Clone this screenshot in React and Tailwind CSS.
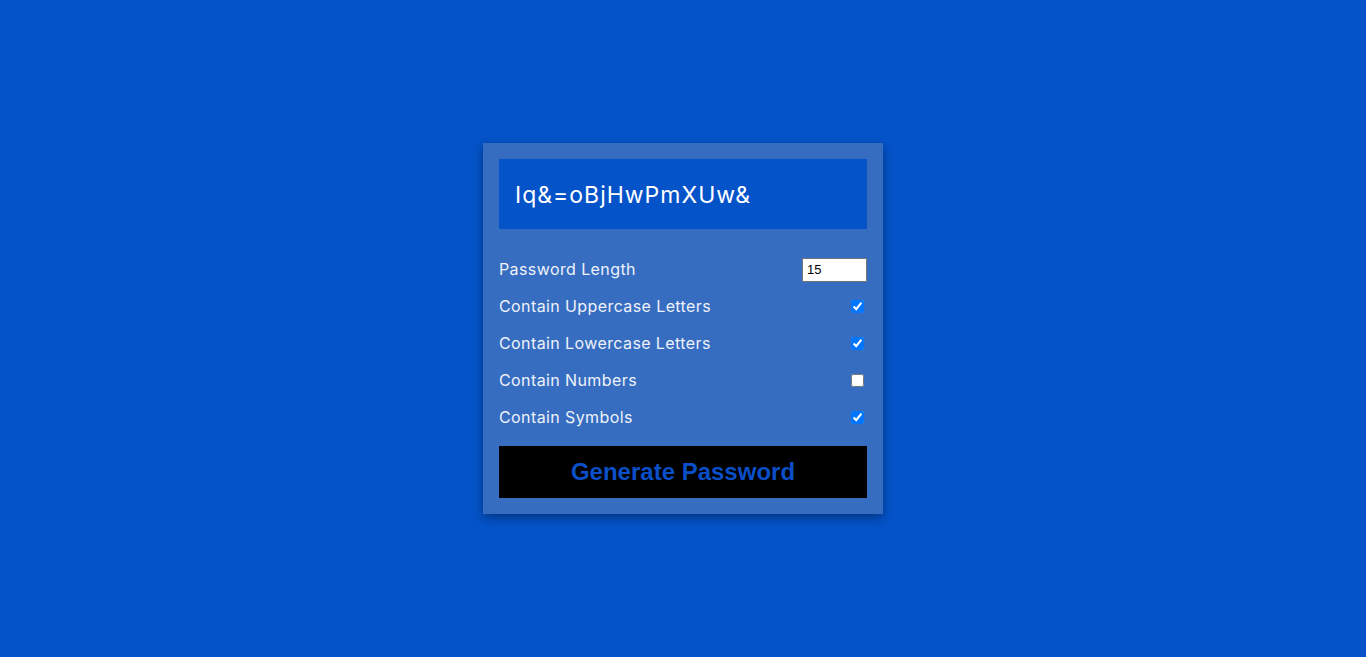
import React, { useState } from 'react';

const options = [
  { id: 'upper', label: 'Contain Uppercase Letters', on: true },
  { id: 'lower', label: 'Contain Lowercase Letters', on: true },
  { id: 'numbers', label: 'Contain Numbers', on: false },
  { id: 'symbols', label: 'Contain Symbols', on: true },
];

function App() {
  const [length, setLength] = useState(15);
  const [checks, setChecks] = useState(
    Object.fromEntries(options.map((o) => [o.id, o.on]))
  );

  return (
    <div
      className="min-h-screen w-full bg-[#0453c9] flex justify-center pt-[143px]"
      style={{ fontFamily: 'Inter, "Open Sans", sans-serif' }}
    >
      <div className="w-[400px] h-[371px] bg-[#366dc0] p-4 shadow-[0_4px_10px_rgba(0,0,0,0.35)]">
        {/* Result */}
        <div className="h-[70px] bg-[#0453c9] flex items-center px-4 pt-[3px]">
          <span className="text-[23px] text-white tracking-[1px]">Iq&amp;=oBjHwPmXUw&amp;</span>
        </div>

        {/* Settings */}
        <div className="mt-[22px]">
          <div className="h-[37px] flex items-center justify-between">
            <span className="text-[16px] tracking-[0.4px] text-[#eef2fa] mb-[2px]">Password Length</span>
            <input
              type="number"
              value={length}
              onChange={(e) => setLength(e.target.value)}
              className="w-[65px] h-[24px] bg-white border border-[#767676] px-1 text-[13px] text-black outline-none"
              style={{ fontFamily: '"Liberation Sans", Arial, sans-serif' }}
            />
          </div>
          {options.map((o) => (
            <div key={o.id} className="h-[37px] flex items-center justify-between">
              <span className="text-[16px] tracking-[0.4px] text-[#eef2fa] mb-[2px]">{o.label}</span>
              <input
                type="checkbox"
                checked={checks[o.id]}
                onChange={() => setChecks({ ...checks, [o.id]: !checks[o.id] })}
                className="w-[13px] h-[13px] mr-[3px]"
              />
            </div>
          ))}
        </div>

        <button
          className="mt-[10px] w-full h-[52px] bg-black text-[#0b4fc8] text-[24px] font-bold"
          style={{ fontFamily: '"Liberation Sans", Arial, sans-serif' }}
        >
          Generate Password
        </button>
      </div>
    </div>
  );
}

export default App;
